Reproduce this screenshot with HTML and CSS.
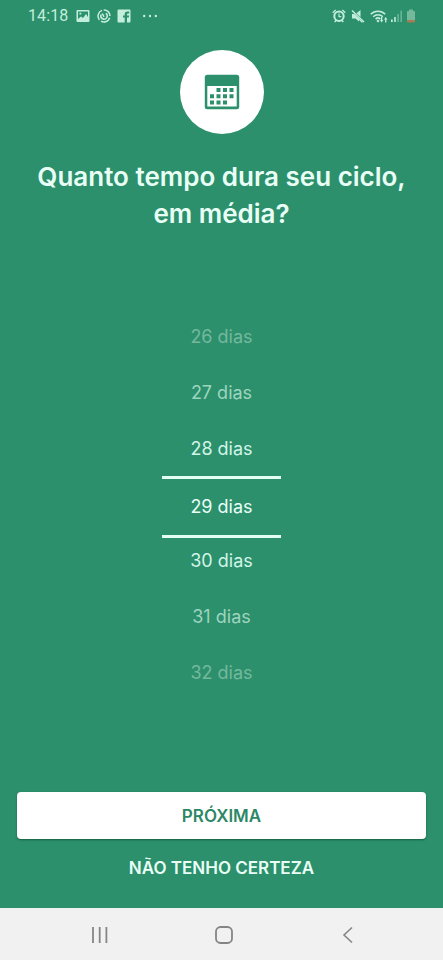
FILE: index.html
```html
<!DOCTYPE html>
<html lang="pt-BR">
<head>
<meta charset="utf-8">
<title>Ciclo</title>
<link rel="stylesheet" href="styles.css">
</head>
<body>
<div class="screen">
  <header class="status">
    <span class="clock">14:18</span>
    <div class="notifications">
      <svg width="14" height="14" viewBox="0 0 14 14"><path fill="currentColor" fill-rule="evenodd" d="M1.5 1h11a1 1 0 0 1 1 1v10a1 1 0 0 1-1 1h-11a1 1 0 0 1-1-1V2a1 1 0 0 1 1-1zM2 2.500v7.500l3-2.500 2 1.500 3-4 2 3V2.500zM3.500 3.700h1.800v1.800H3.500z"/></svg>
      <svg width="14" height="14" viewBox="0 0 14 14" fill="none" stroke="currentColor"><path stroke-width="1.500" d="M5 1.400a6 6 0 0 0-2.500 9.500M4 12.200a6 6 0 0 0 8.700-3.500M13 7A6 6 0 0 0 6.700 1"/><path stroke-width="1.500" d="M4.200 5.500a3.200 3.200 0 1 0 4.600-1.200M7 7.800L5.300 4.500"/></svg>
      <svg width="14" height="14" viewBox="0 0 14 14"><path fill="currentColor" d="M1.500.5h11a1 1 0 0 1 1 1v11a1 1 0 0 1-1 1H10V8.500h1.800l.3-2H10V5.300c0-.6.300-.9 1-.9h1.200V2.500h-1.700C8.600 2.500 7.700 3.600 7.700 5v1.500H6v2h1.700v5H1.500a1 1 0 0 1-1-1v-11a1 1 0 0 1 1-1z"/></svg>
      <svg class="more" width="16" height="14" viewBox="0 0 16 14" fill="currentColor"><circle cx="2.200" cy="7" r="1.200"/><circle cx="8" cy="7" r="1.200"/><circle cx="13.800" cy="7" r="1.200"/></svg>
    </div>
    <div class="system">
      <svg width="14" height="14" viewBox="0 0 14 14" fill="none" stroke="currentColor"><circle cx="7" cy="7.300" r="4.700" stroke-width="2"/><path stroke-width="1.400" d="M.7 3.700L3.700 1M13.300 3.700l-3-2.700M2.700 13l1.400-1.800M11.300 13l-1.400-1.800"/><path stroke-width="1.200" d="M7 4.500v3.200h2.300"/></svg>
      <svg class="mute" width="14" height="14" viewBox="0 0 14 14"><path fill="currentColor" d="M1 5h2.300L12 13l-1 .8-3-2.800v1.500L4.500 9.500H1zM5.500 4.200L9.500 1v7z"/><path stroke="currentColor" stroke-width="1.500" d="M1 1.500l12 11.500"/></svg>
      <svg class="wifi" width="18" height="14" viewBox="0 0 18 14" fill="none" stroke="currentColor"><path stroke-width="1.500" d="M.8 5.300a10.200 10.200 0 0 1 14.400 0M3.200 7.800a6.800 6.800 0 0 1 9.600 0M5.600 10.100a3.400 3.400 0 0 1 4.800 0"/><circle cx="8" cy="12" r=".9" fill="currentColor"/><path fill="currentColor" stroke="none" d="M10 11h1V8h1.300v3h1l-1.700 2.500zM14 10.500l1.700-2.500 1.700 2.500h-1v3h-1.300v-3z"/></svg>
      <svg class="signal" width="13" height="14" viewBox="0 0 13 14" fill="currentColor"><path d="M1 10.500h1.700V13H1zM4.200 8h1.600v5H4.200z"/><path opacity=".4" d="M7.300 5h1.600v8H7.300zM10.400 1.500H12V13h-1.600z"/></svg>
      <svg class="battery" width="10" height="14" viewBox="0 0 10 14"><path fill="#75b99c" d="M3 .5h4v1.500h1.200a.8.800 0 0 1 .8.800V11H1V2.800A.8.800 0 0 1 1.800 2H3z"/><path fill="#a77d50" d="M1 11h8v1.600a.8.800 0 0 1-.8.800H1.800a.8.800 0 0 1-.8-.8z"/></svg>
    </div>
  </header>
  <main class="content">
    <div class="badge">
      <svg width="36" height="36" viewBox="0 0 36 36"><rect x=".8" y=".8" width="34.400" height="34.400" rx="2.500" fill="#2c906d"/><path fill="#fff" d="M3.300 12h29.400v20.500H3.300z"/><path fill="#2c906d" d="M12.500 14h4v4h-4zM19 14h4v4h-4zM25.500 14h4v4h-4zM6 20.300h4v4H6zM12.500 20.300h4v4h-4zM19 20.300h4v4h-4zM25.500 20.300h4v4h-4zM6 26.600h4v4H6zM12.500 26.600h4v4h-4zM19 26.600h4v4h-4z"/></svg>
    </div>
    <h1 class="title">Quanto tempo dura seu ciclo,<br>em média?</h1>
    <ul class="picker">
      <li class="far">26 dias</li>
      <li class="mid">27 dias</li>
      <li class="near">28 dias</li>
      <li class="selected"><span>29 dias</span></li>
      <li class="near">30 dias</li>
      <li class="mid">31 dias</li>
      <li class="far">32 dias</li>
    </ul>
    <button class="next">PRÓXIMA</button>
    <button class="unsure">NÃO TENHO CERTEZA</button>
  </main>
  <nav class="navbar">
    <svg width="18" height="18" viewBox="0 0 18 18"><path fill="none" stroke="currentColor" stroke-width="1.800" d="M2 1v16M8.700 1v16M15.400 1v16"/></svg>
    <svg width="18" height="18" viewBox="0 0 18 18"><rect x="1" y="1" width="16" height="16" rx="4.500" fill="none" stroke="currentColor" stroke-width="1.800"/></svg>
    <svg width="18" height="18" viewBox="0 0 18 18"><path fill="none" stroke="currentColor" stroke-width="1.600" d="M13 1.500L5 9l8 7.500"/></svg>
  </nav>
</div>
</body>
</html>
```
FILE: styles.css
```css
* { box-sizing: border-box; }
body { margin: 0; font-family: Inter, "Liberation Sans", sans-serif; }
svg { display: block; flex: none; }
.screen {
  display: flex;
  flex-direction: column;
  width: 443px;
  height: 960px;
  background: #2c906d;
  color: #e9fff5;
}
.status {
  display: flex;
  align-items: center;
  height: 34px;
  padding: 0 27px 2px 28px;
  color: #c3eedb;
}
.clock { width: 48px; font: 16px/20px Roboto, sans-serif; letter-spacing: .1px; }
.notifications { display: flex; gap: 6.500px; }
.more { margin-left: 4px; }
.system { display: flex; margin-left: auto; }
.mute { margin-left: 5px; }
.wifi { margin-left: 5px; }
.signal { margin-left: 2px; }
.battery { margin-left: 3px; }
.content {
  display: flex;
  flex: 1;
  flex-direction: column;
  align-items: center;
  padding: 16px 17px 0;
}
.badge {
  display: grid;
  place-items: center;
  width: 84px;
  height: 84px;
  border-radius: 50%;
  background: #fff;
}
.title {
  margin: 24px 0 0;
  font-size: 26px;
  font-weight: 600;
  line-height: 37px;
  text-align: center;
  white-space: nowrap;
}
.picker {
  margin: 76px 0 0;
  padding: 0;
  list-style: none;
  font-size: 18px;
  text-align: center;
}
.picker li {
  display: grid;
  place-items: center;
  width: 119px;
  height: 56px;
}
.picker .far { color: #75b89d; }
.picker .mid { color: #9ed5be; }
.picker .near { color: #d2f5e7; }
.picker .selected span {
  width: 119px;
  height: 62px;
  border: solid #e3fff4;
  border-width: 3px 0;
  line-height: 56px;
}
.next, .unsure {
  border: 0;
  padding: 0;
  font: 600 17px/20px Inter, "Liberation Sans", sans-serif;
}
.next {
  width: 409px;
  height: 47px;
  margin-top: 92px;
  border-radius: 4px;
  background: #fff;
  box-shadow: 0 1px 2px #165f42;
  color: #2c8766;
}
.unsure { margin-top: 19px; background: none; color: #e9fff5; }
.navbar {
  display: flex;
  flex: none;
  align-items: center;
  justify-content: space-between;
  height: 52px;
  padding: 1px 86px 0 91px;
  background: #f1f1f1;
  color: #858585;
}
```
